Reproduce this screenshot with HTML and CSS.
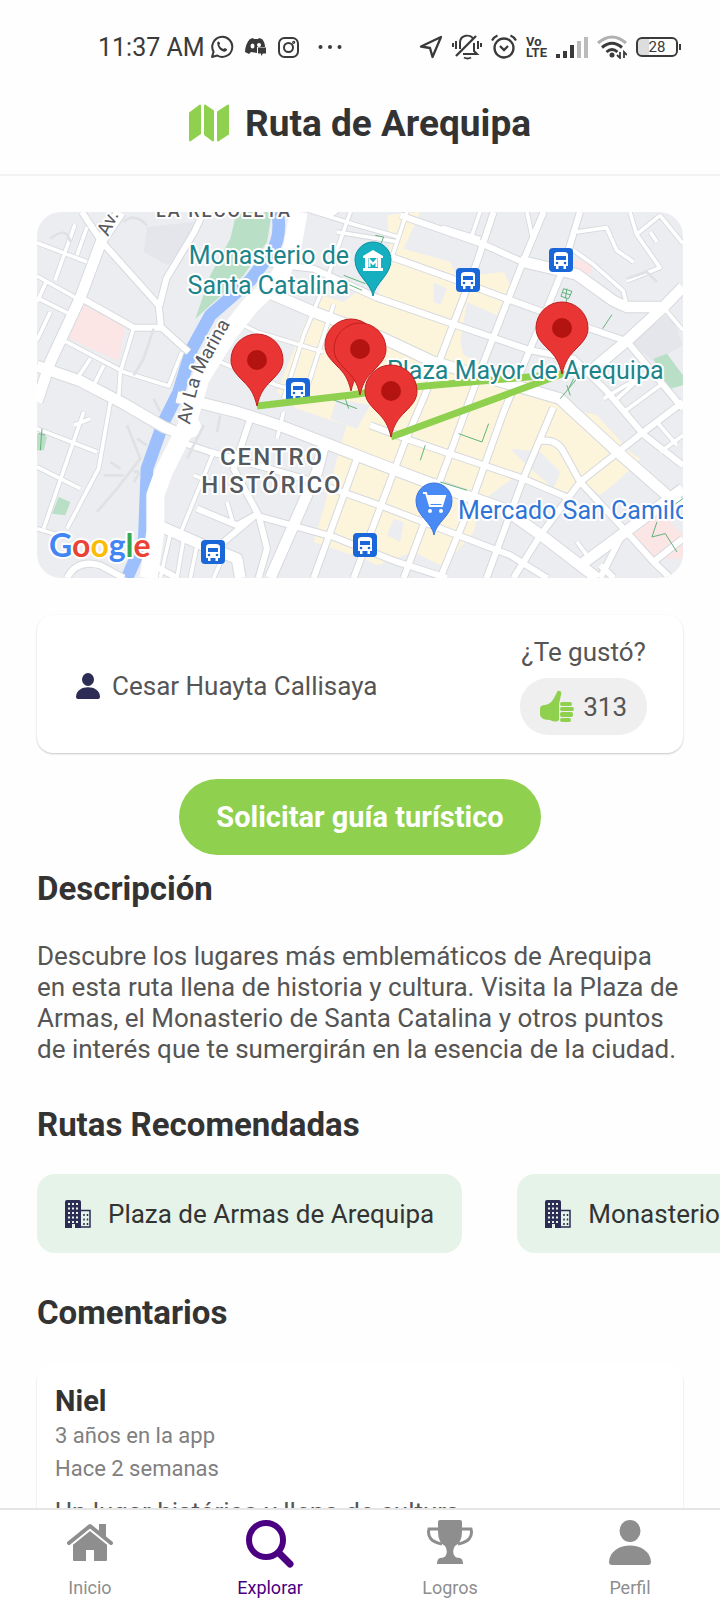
FILE: index.html
```html
<!DOCTYPE html>
<html lang="es">
<head>
  <meta charset="UTF-8" />
  <meta name="viewport" content="width=device-width, initial-scale=1" />
  <title>Ruta de Arequipa</title>
  <link rel="stylesheet" href="styles.css">
</head>
<body>
  <!-- status bar -->
  <div class="status-bar">
    <div class="status-left">
      <span class="time">11:37 AM</span>
      <!-- whatsapp -->
      <svg width="24" height="24" viewBox="0 0 24 24" fill="none" stroke="#3a3a3a" stroke-width="2">
        <path d="M2 22l1.600-5.200A10 10 0 1 1 7.300 20.500Z" stroke-linejoin="round" />
        <path d="M7.200 7.200c.8-1.200 2-.9 2.300.1l.6 1.500-.9 1.300c.9 1.900 2.300 3.200 4.200 4l1.400-1.100 2 1c.7.500-.2 2.600-2.200 2.700C10.700 16.500 7 12 7.200 7.200Z" fill="#3a3a3a" stroke="none" />
      </svg>
      <!-- discord -->
      <svg width="22" height="20" viewBox="0 0 22 20">
        <path d="M5 2l3-1 1 1h4l1-1 3 1c2 2 3 5 3 8h-8v6l-6-1-2 2-4-2C0 10 2 5 5 2Z" fill="#3a3a3a" />
        <ellipse cx="7.500" cy="9" rx="2" ry="2.500" fill="#fff" />
        <ellipse cx="14" cy="8" rx="2" ry="2" fill="#fff" />
        <path d="M13 10.500h8v6h-3l-2 2.500v-2.500h-3Z" fill="#3a3a3a" />
      </svg>
      <!-- instagram -->
      <svg width="21" height="21" viewBox="0 0 21 21" fill="none" stroke="#3a3a3a" stroke-width="2">
        <rect x="1" y="1" width="19" height="19" rx="5.500" />
        <circle cx="10.500" cy="10.500" r="4.500" />
        <circle cx="15.700" cy="5.300" r=".6" />
      </svg>
      <svg class="dots" width="24" height="6" viewBox="0 0 24 6" fill="#3a3a3a">
        <circle cx="2.500" cy="3" r="2" /><circle cx="12" cy="3" r="2" /><circle cx="21.500" cy="3" r="2" />
      </svg>
    </div>
    <div class="status-right">
      <!-- location arrow -->
      <svg width="24" height="24" viewBox="0 0 24 24" fill="none" stroke="#3a3a3a" stroke-width="2.300" stroke-linejoin="round">
        <path d="M22 2L2 11.500l9 1.500 2.500 9Z" />
      </svg>
      <!-- muted bell -->
      <svg width="30" height="26" viewBox="0 0 30 26" fill="none" stroke="#3a3a3a" stroke-width="2">
        <path d="M24 2L4 22" stroke-width="2.300" />
        <path d="M8 15V9c0-9 11-9 13-4M22 9v8l3 3H11" />
        <path d="M12 23.500q3.500 2 7 0M1 9v4M4 7v8M29 9v4M26 7v8" />
      </svg>
      <!-- alarm -->
      <svg width="26" height="26" viewBox="0 0 26 26" fill="none" stroke="#3a3a3a" stroke-width="2.300">
        <circle cx="13" cy="14" r="9.500" />
        <path d="M1 6.500Q3 3 6.500 1.500M25 6.500Q23 3 19.500 1.500M9 12l4 4 4-4" />
      </svg>
      <div class="volte"><span>Vo</span><span>LTE</span></div>
      <!-- signal -->
      <svg width="32" height="22" viewBox="0 0 32 22">
        <path d="M0 18h4v4H0ZM7 15h4v7H7ZM14 9h4v13h-4Z" fill="#3a3a3a" />
        <path d="M21 5h4v17h-4ZM28 1h4v21h-4Z" fill="#bbb" />
      </svg>
      <!-- wifi -->
      <svg width="30" height="24" viewBox="0 0 30 24" fill="none" stroke-width="3">
        <path d="M1 8Q15-4 29 8" stroke="#b0b0b0" />
        <path d="M5 12.500Q15 4 25 12.500M9.500 17Q15 12 20.500 17" stroke="#3a3a3a" />
        <circle cx="15" cy="20" r="2.500" fill="#3a3a3a" />
        <path d="M23 17v6l-3-3M27 23v-6l3 3" stroke="#3a3a3a" stroke-width="1.800" />
      </svg>
      <div class="battery">28</div>
    </div>
  </div>

  <!-- page title -->
  <header class="header">
    <svg width="40" height="38" viewBox="0 0 40 38" fill="#8fd14f" stroke="#8fd14f" stroke-width="2" stroke-linejoin="round">
      <path d="M1 9L11 1.500V29.500L1 36.500Z" />
      <path d="M16 1.500L24 7V36.500L16 30.500Z" />
      <path d="M29 8L39 1.500V30L29 36.500Z" />
    </svg>
    <h1>Ruta de Arequipa</h1>
  </header>

  <main class="content">
    <!-- map -->
    <svg class="map" viewBox="0 0 646 366" preserveAspectRatio="xMidYMid slice" role="img" aria-label="Mapa de la ruta">
      <defs>
        <g id="minor">
          <path d="M0 92L150 150M0 192L125 262M0 257L100 307M114 37L54 205M30 205L0 270M40 300L0 385M70 380L260 480L395 522L435 420M150 45L120 130M160 440L120 500M200 460L165 530M250 480L245 560M290 347L250 480" />
          <path d="M900 60L1085 90M1110 0L1060 150M940 0L870 200L800 370L740 560M890 277L810 530M800 -10L960 40L1085 75M580 320L660 360L860 420M500 430L720 520L790 540" />
          <path d="M1215 45L1330 80M1329 0L1305 70M1470 0L1485 70L1520 0M1619 60L1709 47L1739 115L1790 150M1609 115L1669 157L1759 237L1769 277M1779 0L1799 67L1869 167L1769 207M1869 10L1799 67M1869 10L1938 95M1840 60L1860 90M1879 285L1938 355" />
          <path d="M0 650L180 720M0 765L130 830M140 600L20 950M220 570L185 770L90 950M0 950L100 980M110 640L160 620M530 720L430 965M740 600L720 680M1700 560L1800 500M1730 570L1830 480M1760 600L1870 520M1870 720L1938 670M1860 630L1920 700M470 790L530 815M570 870L590 940M400 965L370 1098M440 980L420 1098M480 1000L460 1098M560 1030L530 1098M1620 990L1650 1030" />
        </g>
        <g id="medium">
          <path d="M135 0L195 90L365 280L372 345L455 420M500 0L472 60L388 200L368 280M130 257L290 347L372 347" />
          <path d="M1050 130L1260 205L1490 290L1660 350L1775 390M700 155L830 170L1020 257L1260 340L1480 415L1610 440L1709 537L1819 667L1938 760" />
          <path d="M1370 0L1320 150L1210 440L1100 700L1040 860L950 1098M1520 0L1459 147L1340 450L1230 750L1100 1098M1629 0L1575 180L1480 410L1400 600L1300 880L1210 1098M1549 587L1459 800L1349 1098" />
          <path d="M1000 640L1120 685L1459 800L1600 860M430 690L520 720L800 800L1029 880L1250 965L1420 1030L1530 1098M480 890L600 940L655 910L890 975L1080 1050L1230 1098M960 740L830 1098M640 620L590 770L665 910L690 1010L665 1098M655 910L560 990" />
          <path d="M1938 570L1820 660L1630 810L1510 970L1430 1098M1509 687Q1560 680 1580 720L1630 810L1760 950L1850 1050L1900 1098M1769 387L1938 590M1090 10L1339 97L1450 147M90 1098Q120 1040 190 1060L260 1098M330 1050L420 1098M1760 960L1690 1098M840 -10Q880 20 900 -10M1850 1050L1938 980M1690 1060L1730 1098" />
        </g>
        <g id="major">
          <path d="M250 0L195 82L130 257L40 450L0 570M0 462L130 507L260 575L380 645L430 665" />
          <path d="M690 240L830 300L1030 375L1190 450L1569 560L1600 590L1750 727L1890 850L1938 880M1450 147L1619 187L1730 267L1770 285L1880 285L1938 225M1880 285L1769 387L1670 470" />
          <path d="M420 555L600 600L740 645L1029 757L1170 810L1400 890L1509 967L1630 1060L1680 1098M340 930L500 1000L600 1040L610 1098M860 700L840 780L700 1098M1630 1060L1769 957L1938 830" />
        </g>
        <path id="marina" d="M785 0L765 110L725 200L640 280L570 370L490 500L450 640L380 780L355 850L355 960L335 1098" />
        <!-- route marker, tip at 0 0 -->
        <g id="pin">
          <path d="M0 0C-3-13-7-18-14-25C-22-33-26-38-26-46A26 26 0 0 1 26-46C26-38 22-33 14-25C7-18 3-13 0 0Z" fill="#ea3535" stroke="#c11f1f" />
          <circle cy="-46" r="10" fill="#b31412" />
        </g>
        <g id="bus">
          <rect x="-12" y="-12" width="24" height="24" rx="4" fill="#1967d8" />
          <path d="M-7 6V-5Q-7-8-3-8H3Q7-8 7-5V6H5V9H2.500V6H-2.500V9H-5V6Z" fill="#fff" />
          <path d="M-5-4H5V0H-5Z" fill="#1967d8" />
          <circle cx="-4" cy="3" r="1.300" fill="#1967d8" /><circle cx="4" cy="3" r="1.300" fill="#1967d8" />
        </g>
        <path id="marina-label" d="M153 213Q160 168 173 148L207 87" />
      </defs>

      <rect width="646" height="366" fill="#ecedf0" />
      <g transform="scale(.3333)">
        <!-- blocks -->
        <path fill="#e4e6eb" d="M330 45L470 30L450 110L390 160L320 120ZM1780 390L1900 300L1938 400L1850 450Z" />
        <path fill="#fcf5dc" d="M1050 10L1150 0L1100 110L1240 150L1260 195L1400 180L1420 220L1380 310L1290 270L1270 390L1280 430L1460 500L1580 560L1640 600L1680 610L1780 720L1810 740L1750 800L1690 850L1640 810L1600 860L1540 840L1440 790L1330 870L1310 960L1240 1040L1210 1060L1130 1020L1020 1060L980 1040L830 990L860 890L900 740L930 640L780 590L720 540L760 440L810 320L850 250L920 270L960 240L1020 257L1060 130Z" />
        <path fill="#ecedf0" d="M900 560L1000 580L960 650L880 620ZM1190 210L1230 230L1210 280L1190 270ZM1420 710L1510 720L1570 780L1550 830L1470 760ZM1070 920L1100 930L1090 990L1050 970Z" />
        <path fill="#fbe5e5" d="M130 272L264 345L244 447L94 377ZM1610 140L1665 155L1660 190L1600 180ZM1775 960L1870 900L1938 970V1040L1860 1040Z" />
        <path fill="#b9dfc6" d="M599 0H705L690 90L620 190L475 320L520 190L580 80ZM1850 440L1890 425L1938 490V520L1900 530L1870 490ZM65 855L100 870L85 910L45 905ZM0 665L30 675L20 715H0Z" />
        <path fill="none" stroke="#9dbffb" stroke-width="38" stroke-linejoin="round" d="M722 0Q735 80 700 125L640 205L520 310L465 410L425 540L380 630L330 770L322 980L270 1098" />

        <!-- streets: outline first, then white on top -->
        <g class="street-edge">
          <use href="#minor" stroke-width="16" /><use href="#medium" stroke-width="24" />
          <use href="#major" stroke-width="38" />
        </g>
        <g class="street">
          <use href="#minor" stroke-width="11" /><use href="#medium" stroke-width="18" />
          <use href="#major" stroke-width="32" /><use href="#marina" stroke-width="54" />
        </g>
        <circle cx="460" cy="645" r="32" fill="#fff" />
        <!-- lanes -->
        <path class="lane" d="M270 640L310 740L240 830L180 900M300 680L330 700M200 790H260M220 750L250 770M290 780Q320 770 290 810M40 80Q90 40 100 90M260 30Q290 0 330 40M350 350L320 440L290 490M500 640L450 740M550 610L540 660M1769 200L1830 180L1860 210M350 560L370 600" />
        <!-- paths inside parks -->
        <path class="garden" d="M1265 665L1335 690L1355 635M1165 700L1150 745M1697 350L1725 308M1580 230L1605 238L1595 260L1572 253ZM1590 230L1585 260M1576 241L1602 249M1590 260L1585 280M1570 560L1620 500M1590 520L1600 550M1610 500L1595 530M1860 930L1845 975L1885 965L1920 1020M920 190L985 215M930 215L975 235M1015 70L1040 75L1030 100M880 560L960 590M925 560L935 590M5 665L25 670M1210 810L1290 835M15 650L10 715M1938 860L1910 880" />
      </g>

      <!-- places -->
      <g class="label place">
        <text x="312" y="52" text-anchor="end">Monasterio de</text>
        <text x="312" y="82" text-anchor="end">Santa Catalina</text>
      </g>
      <g class="label area" text-anchor="middle">
        <text x="187" y="5" class="area-small">LA RECOLETA</text>
        <text x="235" y="253">CENTRO</text>
        <text x="235" y="281">HISTÓRICO</text>
      </g>
      <g class="label road">
        <text><textPath href="#marina-label">Av La Marina</textPath></text>
        <text transform="translate(71 25) rotate(-64)">Av.</text>
      </g>
      <text class="label shop" x="421" y="307">Mercado San Camilo</text>

      <use href="#bus" x="431" y="68" /><use href="#bus" x="524" y="48" /><use href="#bus" x="261" y="178" />
      <use href="#bus" x="176" y="340" /><use href="#bus" x="328" y="333" />

      <!-- museum -->
      <path d="M336 84C334 71 318 63 318 48A18 18 0 0 1 354 48C354 63 338 71 336 84Z" fill="#15afc0" stroke="#0c8f9e" />
      <path d="M326 44L336 38L346 44V46H326ZM328 46H331V56H328ZM341 46H344V56H341ZM326 56H346V59H326Z" fill="#fff" />
      <path d="M332.500 55V48L336 52L339.500 48V55" fill="none" stroke="#fff" stroke-width="2" />
      <!-- market -->
      <path d="M397 323C395 310 379 304 379 289A18 18 0 0 1 415 289C415 304 399 310 397 323Z" fill="#4a8af4" stroke="#3a77e0" />
      <path d="M386 281H389L393 294H405L408 284H390" fill="none" stroke="#fff" stroke-width="2" />
      <path d="M390 284H408L405 292H393Z" fill="#fff" />
      <circle cx="393" cy="299" r="2" fill="#fff" /><circle cx="404" cy="299" r="2" fill="#fff" />

      <!-- route -->
      <path class="route" d="M220 194L314 183L354 177L525 162L354 225" />
      <text class="label place" x="350" y="167">Plaza Mayor de Arequipa</text>
      <use href="#pin" x="220" y="194" /><use href="#pin" x="525" y="162" /><use href="#pin" x="314" y="179" />
      <use href="#pin" x="323" y="183" /><use href="#pin" x="354" y="225" />

      <text class="label google" x="12" y="345"><tspan fill="#4285f4">G</tspan><tspan fill="#ea4335">o</tspan><tspan fill="#fbbc05">o</tspan><tspan fill="#4285f4">g</tspan><tspan fill="#34a853">l</tspan><tspan fill="#ea4335">e</tspan></text>
    </svg>

    <!-- route author and likes -->
    <section class="author-card">
      <div class="author">
        <svg width="24" height="26" viewBox="0 0 24 26" fill="#2c2c54">
          <ellipse cx="12" cy="6.500" rx="6" ry="6.500" />
          <path d="M0 24C0 11 24 11 24 24Q24 26 22 26H2Q0 26 0 24Z" />
        </svg>
        <span>Cesar Huayta Callisaya</span>
      </div>
      <div class="likes">
        <span>¿Te gustó?</span>
        <button class="like-button" type="button">
          <svg width="34" height="33" viewBox="0 0 34 33" fill="#8fd14f">
            <path d="M0 19Q0 15 5 15Q11 14 14 8L17 2Q18 0 20 1Q22 2 21 5L19 14V30Q16 33 10 30Q1 30 0 25Z" />
            <rect x="20" y="12" width="12" height="4" rx="2" /><rect x="20" y="17" width="14" height="4" rx="2" />
            <rect x="20" y="22" width="13" height="5" rx="2" /><rect x="20" y="28" width="11" height="4" rx="2" />
          </svg>
          313
        </button>
      </div>
    </section>

    <button class="guide-button" type="button">Solicitar guía turístico</button>

    <h2 class="first-title">Descripción</h2>
    <p class="description">Descubre los lugares más emblemáticos de Arequipa en esta ruta llena de historia y cultura. Visita la Plaza de Armas, el Monasterio de Santa Catalina y otros puntos de interés que te sumergirán en la esencia de la ciudad.</p>

    <h2>Rutas Recomendadas</h2>
    <div class="routes">
      <a class="route-chip" href="#">
        <svg width="26" height="28" viewBox="0 0 26 28">
          <path d="M2 0H14Q16 0 16 2V28H10V24H7V28H0V2Q0 0 2 0Z" fill="#2c2c54" />
          <path d="M16 10.500H25V27H16" fill="none" stroke="#2c2c54" stroke-width="1.500" />
          <path d="M4 3V23M8 3V23M12 3V23" stroke="#e5f3e8" stroke-width="2" stroke-dasharray="2 2.500" />
          <path d="M19 14V25M22.500 14V25" stroke="#2c2c54" stroke-width="1.500" stroke-dasharray="2 2.500" />
        </svg>
        <span>Plaza de Armas de Arequipa</span>
      </a>
      <a class="route-chip" href="#">
        <svg width="26" height="28" viewBox="0 0 26 28">
          <path d="M2 0H14Q16 0 16 2V28H10V24H7V28H0V2Q0 0 2 0Z" fill="#2c2c54" />
          <path d="M16 10.500H25V27H16" fill="none" stroke="#2c2c54" stroke-width="1.500" />
          <path d="M4 3V23M8 3V23M12 3V23" stroke="#e5f3e8" stroke-width="2" stroke-dasharray="2 2.500" />
          <path d="M19 14V25M22.500 14V25" stroke="#2c2c54" stroke-width="1.500" stroke-dasharray="2 2.500" />
        </svg>
        <span>Monasterio</span>
      </a>
    </div>

    <h2>Comentarios</h2>
    <article class="comment">
      <h3>Niel</h3>
      <p class="meta">3 años en la app</p>
      <p class="meta">Hace 2 semanas</p>
      <p class="comment-text">Un lugar histórico y lleno de cultura</p>
    </article>
  </main>

  <!-- bottom navigation -->
  <nav class="nav">
    <a href="#">
      <svg width="48" height="48" viewBox="0 0 48 48" fill="#8e8e8e">
        <path d="M7 24L24 9L41 24V40Q41 41 40 41H28V30H20V41H8Q7 41 7 40Z" />
        <path d="M3 23L24 6L45 23" fill="none" stroke="#fff" stroke-width="8" />
        <path d="M33 4H40V19L33 13Z" />
        <path d="M3 23L24 6L45 23" fill="none" stroke="#8e8e8e" stroke-width="4" stroke-linecap="round" stroke-linejoin="round" />
      </svg>
      <span>Inicio</span>
    </a>
    <a href="#" class="active">
      <svg width="48" height="48" viewBox="0 0 48 48" fill="none" stroke="#4b0082" stroke-linecap="round">
        <circle cx="20" cy="20" r="17" stroke-width="6" />
        <path d="M33 33L44 44" stroke-width="7" />
      </svg>
      <span>Explorar</span>
    </a>
    <a href="#">
      <svg width="48" height="48" viewBox="0 0 48 48" fill="#8e8e8e">
        <path d="M14 0H34Q36 0 36 2V12Q36 22 29 26Q26 30 28 35Q29 38 34 38Q37 39 37 44H11Q11 39 14 38Q19 38 20 35Q22 30 19 26Q12 22 12 12V2Q12 0 14 0Z" />
        <path d="M12 9H3Q0 21 16 24M36 9H45Q48 21 32 24" fill="none" stroke="#8e8e8e" stroke-width="3" />
      </svg>
      <span>Logros</span>
    </a>
    <a href="#">
      <svg width="48" height="48" viewBox="0 0 48 48" fill="#8e8e8e">
        <ellipse cx="24" cy="11" rx="10.500" ry="11" />
        <path d="M3 42C4 20 44 20 45 42Q45 45 42 45H6Q3 45 3 42Z" />
      </svg>
      <span>Perfil</span>
    </a>
  </nav>
</body>
</html>
```
FILE: styles.css
```css
* {
  box-sizing: border-box;
}

body {
  margin: 0;
  height: 100vh;
  display: flex;
  flex-direction: column;
  background-color: #fefefe;
  color: #555;
  font-family: Roboto, Arial, sans-serif;
  font-size: 26px;
  overflow: hidden;
}

h1, h2, h3, p {
  margin: 0;
}

svg {
  flex-shrink: 0;
}

a {
  color: inherit;
  text-decoration: none;
}

button {
  border: none;
  font-family: inherit;
  cursor: pointer;
}

/* status bar */
.status-bar {
  flex-shrink: 0;
  display: flex;
  justify-content: space-between;
  align-items: center;
  height: 72px;
  padding: 22px 38px 0 98px;
  color: #3a3a3a;
}

.status-left,
.status-right {
  display: flex;
  align-items: center;
}

.status-left {
  gap: 11px;
}

.status-right {
  gap: 9px;
}

.time {
  font-size: 25px;
  margin-right: -6px;
}

.dots {
  margin-left: 8px;
}

.volte {
  display: flex;
  flex-direction: column;
  font-size: 13px;
  line-height: 11px;
  font-weight: bold;
}

.battery {
  position: relative;
  width: 42px;
  height: 20px;
  border: 2px solid #3a3a3a;
  border-radius: 6px;
  background: linear-gradient(to right, #ddd 28%, transparent 28%);
  font-size: 15px;
  line-height: 17px;
  text-align: center;
  margin-right: 4px;
}

/* battery tip */
.battery::after {
  content: "";
  position: absolute;
  right: -5px;
  top: 5px;
  width: 2px;
  height: 6px;
  background-color: #3a3a3a;
}

/* header */
.header {
  flex-shrink: 0;
  display: flex;
  justify-content: center;
  align-items: center;
  gap: 16px;
  height: 104px;
  border-bottom: 2px solid #f3f3f3;
}

h1 {
  font-size: 37px;
  color: #333;
}

/* scrolling content */
.content {
  flex: 1;
  min-height: 0;
  padding: 36px 37px 0;
  overflow-y: auto;
  scrollbar-width: none;
}

.map {
  display: block;
  width: 100%;
  border-radius: 24px;
}

.street,
.street-edge {
  fill: none;
  stroke: #fff;
  stroke-linejoin: round;
}

.street-edge {
  stroke: #d6d9dd;
}

.lane {
  fill: none;
  stroke: #dfe1e5;
  stroke-width: 8;
}

.garden {
  fill: none;
  stroke: #62b27c;
  stroke-width: 3;
}

.route {
  fill: none;
  stroke: #8fd14f;
  stroke-width: 7;
  stroke-linejoin: round;
}

/* map labels */
.label {
  font-size: 25px;
  stroke: #fff;
  stroke-width: 4px;
  stroke-linejoin: round;
  paint-order: stroke;
}

.place {
  fill: #1c848a;
}

.shop {
  fill: #2f75d6;
}

.area {
  fill: #55585d;
  font-size: 24px;
  font-weight: 500;
  letter-spacing: 2px;
}

.area-small {
  font-size: 18px;
}

.road {
  fill: #55585d;
  font-size: 19px;
}

.google {
  font-family: Lato, sans-serif;
  font-size: 32px;
  font-weight: bold;
}

/* author card */
.author-card {
  display: flex;
  justify-content: space-between;
  align-items: center;
  margin-top: 37px;
  padding: 22px 36px 18px 39px;
  border-radius: 16px;
  background-color: #fff;
  box-shadow: 0 1px 2px rgba(0, 0, 0, 0.22);
}

.author {
  display: flex;
  align-items: center;
  gap: 12px;
}

.likes {
  display: flex;
  flex-direction: column;
  align-items: center;
  gap: 11px;
}

.like-button {
  display: flex;
  align-items: center;
  gap: 9px;
  height: 57px;
  padding: 0 20px;
  border-radius: 28px;
  background-color: #efefef;
  color: #555;
  font-size: 26px;
}

/* green button */
.guide-button {
  display: block;
  margin: 26px auto 0;
  height: 76px;
  padding: 0 37px;
  border-radius: 38px;
  background-color: #8fd14f;
  color: #fff;
  font-size: 29px;
  font-weight: bold;
}

h2 {
  margin-top: 40px;
  font-size: 33px;
  line-height: 39px;
  color: #333;
}

.first-title {
  margin-top: 14px;
}

.description {
  margin-top: 33px;
  line-height: 31px;
}

/* recommended routes */
.routes {
  display: flex;
  gap: 55px;
  margin: 30px -37px 0 0;
  overflow: hidden;
}

.route-chip {
  flex-shrink: 0;
  display: flex;
  align-items: center;
  gap: 17px;
  height: 79px;
  padding: 0 28px;
  border-radius: 18px;
  background-color: #e5f3e8;
  color: #333;
}

/* comments */
.comment {
  margin-top: 32px;
  padding: 20px 18px;
  border-radius: 16px;
  background-color: #fff;
  box-shadow: 0 2px 2px rgba(0, 0, 0, 0.18);
}

h3 {
  font-size: 29px;
  line-height: 35px;
  color: #333;
}

.meta {
  font-size: 22px;
  line-height: 33px;
  color: #808080;
}

.comment-text {
  margin-top: 12px;
  line-height: 31px;
}

/* bottom navigation */
.nav {
  flex-shrink: 0;
  display: flex;
  height: 92px;
  border-top: 2px solid #e6e6e6;
  background-color: #fff;
}

.nav a {
  flex: 1;
  display: flex;
  flex-direction: column;
  align-items: center;
  gap: 9px;
  padding-top: 10px;
  font-size: 18px;
  line-height: 22px;
  color: #8e8e8e;
}

.nav .active {
  color: #4b0082;
}
```
